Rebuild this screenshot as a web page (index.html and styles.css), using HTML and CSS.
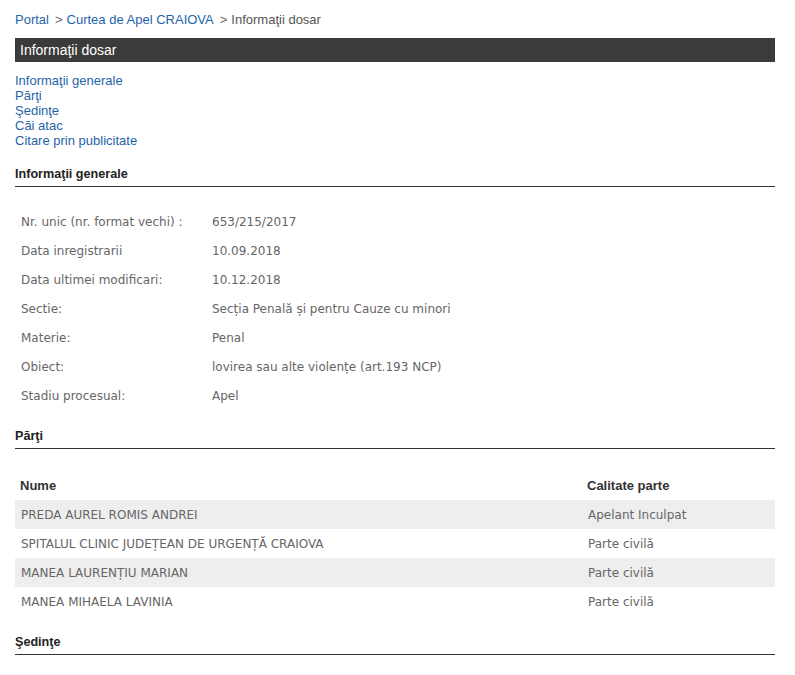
FILE: index.html
```html
<!DOCTYPE html>
<html lang="ro">
<head>
<meta charset="utf-8">
<title>Informaţii dosar</title>
<link rel="stylesheet" href="styles.css">
</head>
<body>
<div class="page">
  <div class="breadcrumb">
    <a href="#">Portal</a><span class="sep">&gt;</span><a href="#">Curtea de Apel CRAIOVA</a><span class="sep">&gt;</span><span class="current">Informaţii dosar</span>
  </div>
  <div class="title-bar">Informaţii dosar</div>
  <ul class="toc">
    <li><a href="#">Informaţii generale</a></li>
    <li><a href="#">Părţi</a></li>
    <li><a href="#">Şedinţe</a></li>
    <li><a href="#">Căi atac</a></li>
    <li><a href="#">Citare prin publicitate</a></li>
  </ul>

  <h2 class="section-title">Informaţii generale</h2>
  <div class="info">
    <div class="info-row"><span class="label">Nr. unic (nr. format vechi) :</span><span class="value">653/215/2017</span></div>
    <div class="info-row"><span class="label">Data inregistrarii</span><span class="value">10.09.2018</span></div>
    <div class="info-row"><span class="label">Data ultimei modificari:</span><span class="value">10.12.2018</span></div>
    <div class="info-row"><span class="label">Sectie:</span><span class="value">Secția Penală și pentru Cauze cu minori</span></div>
    <div class="info-row"><span class="label">Materie:</span><span class="value">Penal</span></div>
    <div class="info-row"><span class="label">Obiect:</span><span class="value">lovirea sau alte violențe (art.193 NCP)</span></div>
    <div class="info-row"><span class="label">Stadiu procesual:</span><span class="value">Apel</span></div>
  </div>

  <h2 class="section-title">Părţi</h2>
  <div class="parties">
    <div class="parties-head"><span>Nume</span><span>Calitate parte</span></div>
    <div class="parties-row"><span>PREDA AUREL ROMIS ANDREI</span><span>Apelant Inculpat</span></div>
    <div class="parties-row"><span>SPITALUL CLINIC JUDEȚEAN DE URGENȚĂ CRAIOVA</span><span>Parte civilă</span></div>
    <div class="parties-row"><span>MANEA LAURENȚIU MARIAN</span><span>Parte civilă</span></div>
    <div class="parties-row"><span>MANEA MIHAELA LAVINIA</span><span>Parte civilă</span></div>
  </div>

  <h2 class="section-title">Şedinţe</h2>
</div>
</body>
</html>
```

FILE: styles.css
```css
html, body {
  margin: 0;
  padding: 0;
  background: #ffffff;
}

body {
  font-family: "Liberation Sans", Arial, sans-serif;
  font-size: 13px;
  color: #333333;
}

.page {
  width: 760px;
  padding: 12px 0 0 15px;
}

a {
  color: #1f64a8;
  text-decoration: none;
}

.breadcrumb {
  line-height: 16px;
  height: 16px;
  font-size: 13px;
}

.breadcrumb .sep {
  color: #666666;
  margin: 0 4px 0 6px;
}

.breadcrumb .current {
  color: #555555;
}

.title-bar {
  margin-top: 10px;
  height: 24px;
  line-height: 24px;
  background: #3b3b3b;
  color: #ffffff;
  font-size: 14px;
  padding-left: 5px;
}

.toc {
  list-style: none;
  margin: 11px 0 0 0;
  padding: 0;
  line-height: 15px;
  font-size: 13px;
}

.section-title {
  margin: 18px 0 0 0;
  font-size: 12.6px;
  font-weight: bold;
  color: #222222;
  line-height: 17px;
  padding-bottom: 3px;
  border-bottom: 1px solid #333333;
}

.info {
  margin-top: 20px;
  font-family: "DejaVu Sans", Verdana, sans-serif;
  font-size: 12px;
  color: #666666;
}

.info-row {
  display: grid;
  grid-template-columns: 191px 1fr;
  height: 29px;
  align-items: center;
}

.info-row .label,
.info-row .value {
  padding-left: 6px;
}

.parties {
  margin-top: 21px;
}

.parties-head,
.parties-row {
  display: grid;
  grid-template-columns: 567px 1fr;
  align-items: center;
}

.parties-head {
  height: 30px;
  font-weight: bold;
  font-size: 13px;
  color: #333333;
  box-sizing: border-box;
}

.parties-head span {
  padding-left: 5px;
}

.parties-row {
  height: 29px;
  font-family: "DejaVu Sans", Verdana, sans-serif;
  font-size: 12px;
  color: #666666;
}

.parties-row span {
  padding-left: 6px;
}

.parties-row:nth-child(even) {
  background: #eeeeee;
}
```
